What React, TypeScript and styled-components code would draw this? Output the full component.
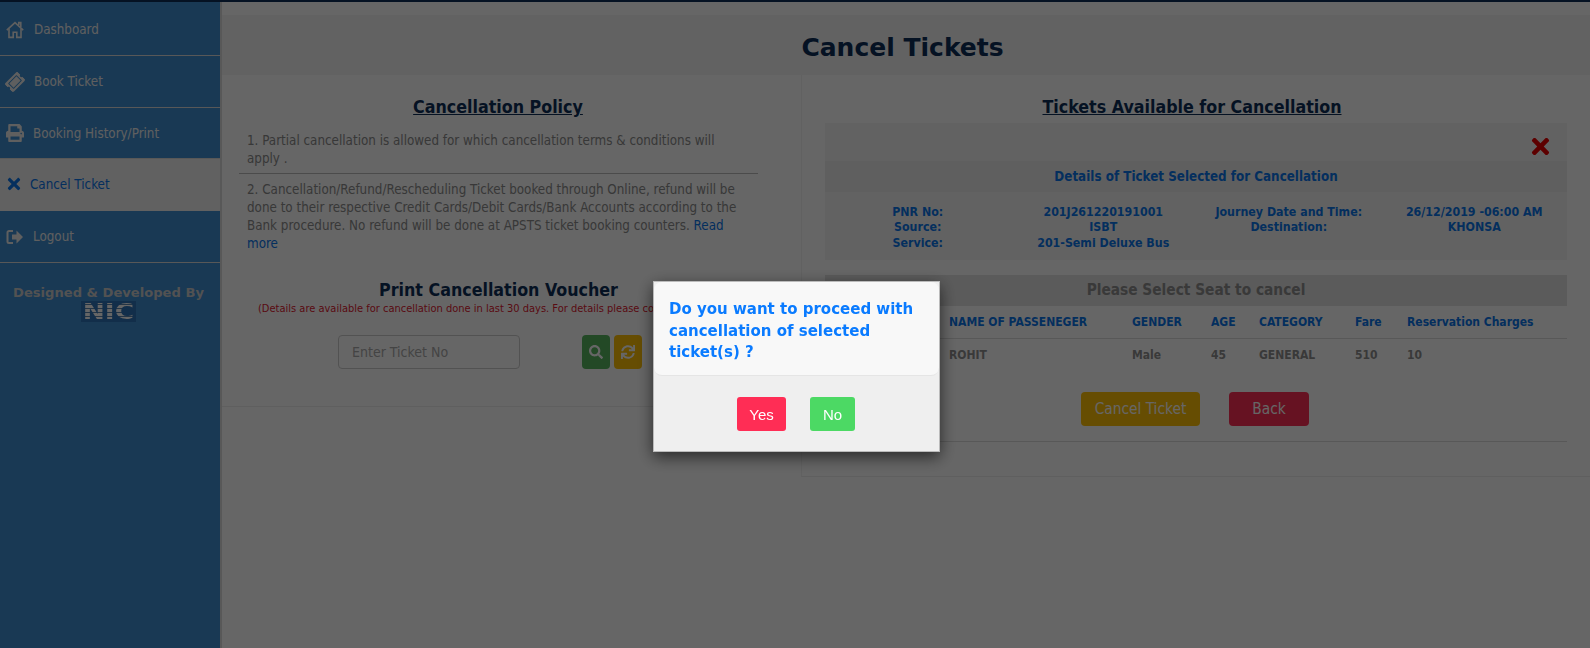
import React from 'react';
import styled, { createGlobalStyle } from 'styled-components';
import { FaPrint, FaTimes, FaTicketAlt, FaSearch, FaSync } from 'react-icons/fa';

const GlobalStyle = createGlobalStyle`
    html, body {
        margin: 0;
        height: 100%;
        background: #fff;
        overflow: hidden;
    }
    body {
        font-family: "DejaVu Sans Condensed", "DejaVu Sans", sans-serif;
        font-size: 13.3px;
        color: #8c8c8c;
    }
`;

const Page = styled.div`
    height: 648px;
    border-top: 2px solid #0d2f57;
    box-sizing: border-box;
    display: flex;
`;

const Sidebar = styled.nav`
    width: 220px;
    flex: none;
    background: #3f8fd2;
    border-right: 2px solid #ddd;
    padding-top: 2px;
`;

const NavItem = styled.a<{ $active?: boolean; $h: number; $gap: number }>`
    height: ${p => p.$h}px;
    box-sizing: border-box;
    display: flex;
    align-items: center;
    gap: ${p => p.$gap}px;
    padding-left: 6px;
    padding-bottom: ${p => (p.$active ? 2 : 0)}px;
    border-bottom: ${p => (p.$active ? 'none' : '1px solid #ddd')};
    background: ${p => (p.$active ? '#f2f2f2' : 'transparent')};
    color: ${p => (p.$active ? '#0a75ea' : '#eee')};
    font-size: 13.3px;
    svg { flex: none; width: 18px; height: 18px; }
`;

const Credit = styled.div`
    margin-top: 22px;
    padding-right: 3px;
    text-align: center;
    font-family: "DejaVu Sans", sans-serif;
    font-weight: 700;
    font-size: 13.1px;
    color: #ccc;
`;

const NicLogo = styled.div`
    width: 55px;
    height: 21px;
    margin: 1px auto 0;
    background: #2f74b8;
    display: flex;
    justify-content: center;
    font-family: "DejaVu Sans", sans-serif;
    font-weight: 900;
    font-size: 22px;
    line-height: 21px;
`;

const NicLetters = styled.span`
    display: inline-block;
    color: transparent;
    transform: scaleX(1.2);
    background: repeating-linear-gradient(180deg, #fff 0 3px, #5a86b0 3px 4px);
    -webkit-background-clip: text;
    background-clip: text;
`;

const Main = styled.main`
    flex: 1;
    min-width: 0;
`;

const TitleBand = styled.header`
    height: 73px;
    box-sizing: border-box;
    padding: 16px 7px 0 0;
    background: linear-gradient(#fff 0 13px, #f5f5f5 13px);
    text-align: center;
`;

const PageTitle = styled.h1`
    margin: 0;
    font-family: "DejaVu Sans", sans-serif;
    font-size: 25px;
    line-height: 60px;
    color: #0d2f57;
`;

const Columns = styled.div`
    display: grid;
    grid-template-columns: 579px 1fr;
`;

const LeftCol = styled.section`
    height: 332px;
    box-sizing: border-box;
    padding: 21px 43px 0 17px;
    border-bottom: 1px solid #eee;
`;

const RightCol = styled.section`
    height: 402px;
    box-sizing: border-box;
    padding: 21px 24px 0 23px;
    border-bottom: 1px solid #eee;
    border-left: 1px solid #f3f3f3;
`;

const SectionTitle = styled.h2<{ $shift?: number }>`
    margin: 0;
    font-size: 17.7px;
    line-height: 22px;
    text-align: center;
    font-weight: 700;
    text-decoration: underline;
    color: #0d2f57;
    padding-right: ${p => p.$shift || 0}px;
`;

const PolicyText = styled.p`
    margin: 0;
    padding: 7px 8px;
    line-height: 18px;
    &:first-child { padding: 9px 8px 5px; }
`;

const PolicyList = styled.div`
    margin-top: 5px;
    & > p + p { border-top: 1px solid #bbb; }
`;

const ReadMore = styled.a`
    color: #0a75ea;
`;

const VoucherTitle = styled.h3`
    margin: 18px 0 0;
    text-align: center;
    font-size: 17.7px;
    line-height: 24px;
    color: #0d2f57;
`;

const VoucherNote = styled.div`
    padding-left: 19px;
    font-size: 11px;
    line-height: 14px;
    color: #e02030;
    white-space: nowrap;
`;

const SearchRow = styled.div`
    margin-top: 19px;
    padding-left: 99px;
    display: flex;
`;

const TicketInput = styled.input`
    width: 182px;
    height: 34px;
    box-sizing: border-box;
    padding: 0 13px;
    margin-right: 62px;
    border: 1px solid #ccc;
    border-radius: 4px;
    background: #fff;
    font: inherit;
    font-size: 14px;
    &::placeholder { color: #aaa; }
`;

const IconButton = styled.button<{ $bg: string }>`
    width: 28px;
    height: 34px;
    margin-right: 4px;
    padding: 0;
    border: none;
    border-radius: 4px;
    background: ${p => p.$bg};
    color: #fff;
    display: flex;
    align-items: center;
    justify-content: center;
    svg { width: 14px; height: 14px; }
`;

const DetailPanel = styled.div`
    margin-top: 5px;
    height: 137px;
    background: #f5f5f5;
`;

const CloseRow = styled.div`
    height: 38px;
    box-sizing: border-box;
    padding: 11px 15px 0 0;
    display: flex;
    justify-content: flex-end;
    color: #e80000;
    svg { width: 23px; height: 25px; }
`;

const DetailTitle = styled.div`
    height: 31px;
    line-height: 31px;
    background: #eee;
    text-align: center;
    font-weight: 700;
    color: #0a75ea;
`;

const DetailGrid = styled.div`
    margin-top: 13px;
    display: grid;
    grid-template-columns: repeat(4, 1fr);
    text-align: center;
    font-size: 12.3px;
    font-weight: 700;
    line-height: 15.3px;
    color: #0a75ea;
`;

const SeatTitle = styled.div`
    margin-top: 15px;
    height: 31px;
    line-height: 31px;
    background: #e3e3e3;
    text-align: center;
    font-size: 15.3px;
    font-weight: 700;
    color: #8f8f8f;
`;

const SeatTable = styled.table`
    width: 100%;
    table-layout: fixed;
    border-collapse: collapse;
    font-size: 12px;
    font-weight: 700;
`;

const HeadCell = styled.th`
    height: 32px;
    padding: 0 8px;
    text-align: left;
    white-space: nowrap;
    color: #0a75ea;
    border-bottom: 1px solid #ddd;
`;

const BodyCell = styled.td`
    height: 32px;
    padding: 0 8px;
    color: #8f8f8f;
`;

const Actions = styled.div`
    margin-top: 21px;
    padding: 0 0 15px 256px;
    display: flex;
    gap: 29px;
    border-bottom: 1px solid #ddd;
`;

const ActionButton = styled.button<{ $bg: string; $w: number }>`
    width: ${p => p.$w}px;
    height: 34px;
    padding: 0;
    border: none;
    border-radius: 4px;
    background: ${p => p.$bg};
    color: #fff;
    font: inherit;
    font-size: 15.3px;
`;

const Overlay = styled.div`
    position: fixed;
    inset: 0;
    background: rgba(0, 0, 0, 0.6);
`;

const Modal = styled.div`
    position: fixed;
    left: 653px;
    top: 281px;
    width: 287px;
    height: 171px;
    box-sizing: border-box;
    background: #efefef;
    border: 1px solid #bbb;
    box-shadow: 0 5px 15px rgba(0, 0, 0, 0.6);
`;

const ModalHead = styled.div`
    height: 94px;
    box-sizing: border-box;
    padding: 17px 15px 0;
    background: #f8f8f8;
    border-bottom: 1px solid #e5e5e5;
    border-radius: 8px;
    font-family: "DejaVu Sans", sans-serif;
    font-weight: 700;
    font-size: 15px;
    line-height: 21.5px;
    color: #0a7bff;
`;

const ModalActions = styled.div`
    margin-top: 21px;
    padding-left: 83px;
    display: flex;
    gap: 24px;
`;

const ModalButton = styled.button<{ $bg: string; $w: number }>`
    width: ${p => p.$w}px;
    height: 34px;
    padding: 0;
    border: none;
    border-radius: 3px;
    background: ${p => p.$bg};
    color: #fff;
    font-family: "Liberation Sans", sans-serif;
    font-size: 15px;
`;

const TicketIcon = styled(FaTicketAlt)`
    transform: rotate(-45deg);
`;

const NavCloseIcon = styled(FaTimes)`
    margin-left: -1px;
`;

const HomeIcon = () => (
    <svg viewBox="0 0 18 18" fill="none" stroke="currentColor" strokeWidth="1.6">
        <path d="M0.8 9.2 9 1.6l8.2 7.6" />
        <path d="M3 7.6V16.4h4.2v-5.2h3.6v5.2H15V7.6" />
        <path d="M12.8 4V1.6h2V6" />
    </svg>
);

const LogoutIcon = () => (
    <svg viewBox="0 0 18 18">
        <path d="M7 3H3a1.5 1.5 0 0 0-1.5 1.5v9A1.5 1.5 0 0 0 3 15h4" fill="none" stroke="currentColor" strokeWidth="2" />
        <path d="M6 6.5h4.5V2.5L17 9l-6.5 6.5v-4H6z" fill="currentColor" />
    </svg>
);

const columns = [116, 183, 79, 48, 96, 52, 168];

export default function App() {
    return (
        <>
            <GlobalStyle />
            <Page>
                <Sidebar>
                    <NavItem $h={52} $gap={10}><HomeIcon />Dashboard</NavItem>
                    <NavItem $h={52} $gap={10}><TicketIcon />Book Ticket</NavItem>
                    <NavItem $h={51} $gap={9}><FaPrint />Booking History/Print</NavItem>
                    <NavItem $h={52} $gap={7} $active><NavCloseIcon />Cancel Ticket</NavItem>
                    <NavItem $h={52} $gap={9}><LogoutIcon />Logout</NavItem>
                    <Credit>
                        Designed &amp; Developed By
                        <NicLogo><NicLetters>NIC</NicLetters></NicLogo>
                    </Credit>
                </Sidebar>
                <Main>
                    <TitleBand><PageTitle>Cancel Tickets</PageTitle></TitleBand>
                    <Columns>
                        <LeftCol>
                            <SectionTitle $shift={1}>Cancellation Policy</SectionTitle>
                            <PolicyList>
                                <PolicyText>1. Partial cancellation is allowed for which cancellation terms &amp; conditions will apply .</PolicyText>
                                <PolicyText>
                                    2. Cancellation/Refund/Rescheduling Ticket booked through Online, refund will be done to their respective Credit Cards/Debit Cards/Bank Accounts according to the Bank procedure. No refund will be done at APSTS ticket booking counters. <ReadMore>Read more</ReadMore>
                                </PolicyText>
                            </PolicyList>
                            <VoucherTitle>Print Cancellation Voucher</VoucherTitle>
                            <VoucherNote>(Details are available for cancellation done in last 30 days. For details please contact helpdesk)</VoucherNote>
                            <SearchRow>
                                <TicketInput placeholder="Enter Ticket No" />
                                <IconButton $bg="#57b660"><FaSearch /></IconButton>
                                <IconButton $bg="#ffc107"><FaSync /></IconButton>
                            </SearchRow>
                        </LeftCol>
                        <RightCol>
                            <SectionTitle $shift={8}>Tickets Available for Cancellation</SectionTitle>
                            <DetailPanel>
                                <CloseRow><FaTimes /></CloseRow>
                                <DetailTitle>Details of Ticket Selected for Cancellation</DetailTitle>
                                <DetailGrid>
                                    <div>PNR No:</div><div>201J261220191001</div><div>Journey Date and Time:</div><div>26/12/2019 -06:00 AM</div>
                                    <div>Source:</div><div>ISBT</div><div>Destination:</div><div>KHONSA</div>
                                    <div>Service:</div><div>201-Semi Deluxe Bus</div><div /><div />
                                </DetailGrid>
                            </DetailPanel>
                            <SeatTitle>Please Select Seat to cancel</SeatTitle>
                            <SeatTable>
                                <colgroup>
                                    {columns.map((w, i) => <col key={i} width={w} />)}
                                </colgroup>
                                <thead>
                                    <tr>
                                        <HeadCell />
                                        <HeadCell>NAME OF PASSENEGER</HeadCell>
                                        <HeadCell>GENDER</HeadCell>
                                        <HeadCell>AGE</HeadCell>
                                        <HeadCell>CATEGORY</HeadCell>
                                        <HeadCell>Fare</HeadCell>
                                        <HeadCell>Reservation Charges</HeadCell>
                                    </tr>
                                </thead>
                                <tbody>
                                    <tr>
                                        <BodyCell />
                                        <BodyCell>ROHIT</BodyCell>
                                        <BodyCell>Male</BodyCell>
                                        <BodyCell>45</BodyCell>
                                        <BodyCell>GENERAL</BodyCell>
                                        <BodyCell>510</BodyCell>
                                        <BodyCell>10</BodyCell>
                                    </tr>
                                </tbody>
                            </SeatTable>
                            <Actions>
                                <ActionButton $bg="#ffc107" $w={119}>Cancel Ticket</ActionButton>
                                <ActionButton $bg="#ff2d55" $w={80}>Back</ActionButton>
                            </Actions>
                        </RightCol>
                    </Columns>
                </Main>
            </Page>
            <Overlay />
            <Modal>
                <ModalHead>Do you want to proceed with cancellation of selected ticket(s) ?</ModalHead>
                <ModalActions>
                    <ModalButton $bg="#ff2d55" $w={49}>Yes</ModalButton>
                    <ModalButton $bg="#4cd964" $w={45}>No</ModalButton>
                </ModalActions>
            </Modal>
        </>
    );
}
